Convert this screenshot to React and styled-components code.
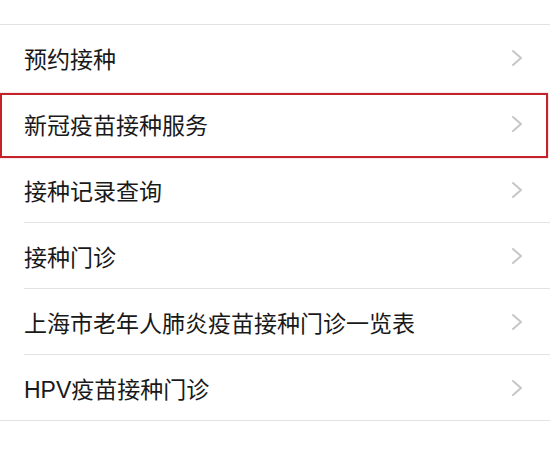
import React from 'react'
import styled, { createGlobalStyle } from 'styled-components'

const GlobalStyle = createGlobalStyle`
  body {
    margin: 0;
    background: #fff;
    font-family: "Liberation Sans", "Noto Sans CJK SC", sans-serif;
  }
`

const Page = styled.div`
  width: 550px;
  height: 463px;
  padding-top: 24px;
  box-sizing: border-box;
  background: #fff;
`

const List = styled.ul`
  list-style: none;
  margin: 0;
  padding: 0;
  border-top: 1px solid #e2e2e2;
  border-bottom: 1px solid #e2e2e2;
`

const Row = styled.li`
  position: relative;
  height: 65px;
  display: flex;
  align-items: center;
  justify-content: space-between;
  padding: 0 27px 0 24px;

  &:not(:last-child)::before {
    content: '';
    position: absolute;
    left: 24px;
    right: 0;
    bottom: -1px;
    height: 1px;
    background: ${p => (p.$noLine ? 'transparent' : '#e2e2e2')};
  }

  & + & {
    margin-top: 1px;
  }

  ${p => p.$marked && `
    &::after {
      content: '';
      position: absolute;
      top: 2px;
      bottom: -2px;
      left: 0;
      right: 2px;
      border: 2.5px solid #c4232a;
      box-shadow: 0 0 1px rgba(196, 35, 42, 0.6);
      z-index: 2;
    }
  `}
`

const Label = styled.span`
  font-size: 23px;
  color: #191919;
`

const Chevron = () => (
  <svg width="12" height="18" viewBox="0 0 12 18" fill="none">
    <path d="M2 2 L10 9 L2 16" stroke="#c6c6c6" strokeWidth="2" strokeLinecap="round" strokeLinejoin="round" />
  </svg>
)

const items = [
  { text: '预约接种', noLine: true },
  { text: '新冠疫苗接种服务', marked: true, noLine: true },
  { text: '接种记录查询' },
  { text: '接种门诊' },
  { text: '上海市老年人肺炎疫苗接种门诊一览表' },
  { text: 'HPV疫苗接种门诊' },
]

const App = () => {
  return (
    <Page>
      <GlobalStyle />
      <List>
        {items.map(item => (
          <Row key={item.text} $marked={item.marked} $noLine={item.noLine}>
            <Label>{item.text}</Label>
            <Chevron />
          </Row>
        ))}
      </List>
    </Page>
  )
}

export default App
